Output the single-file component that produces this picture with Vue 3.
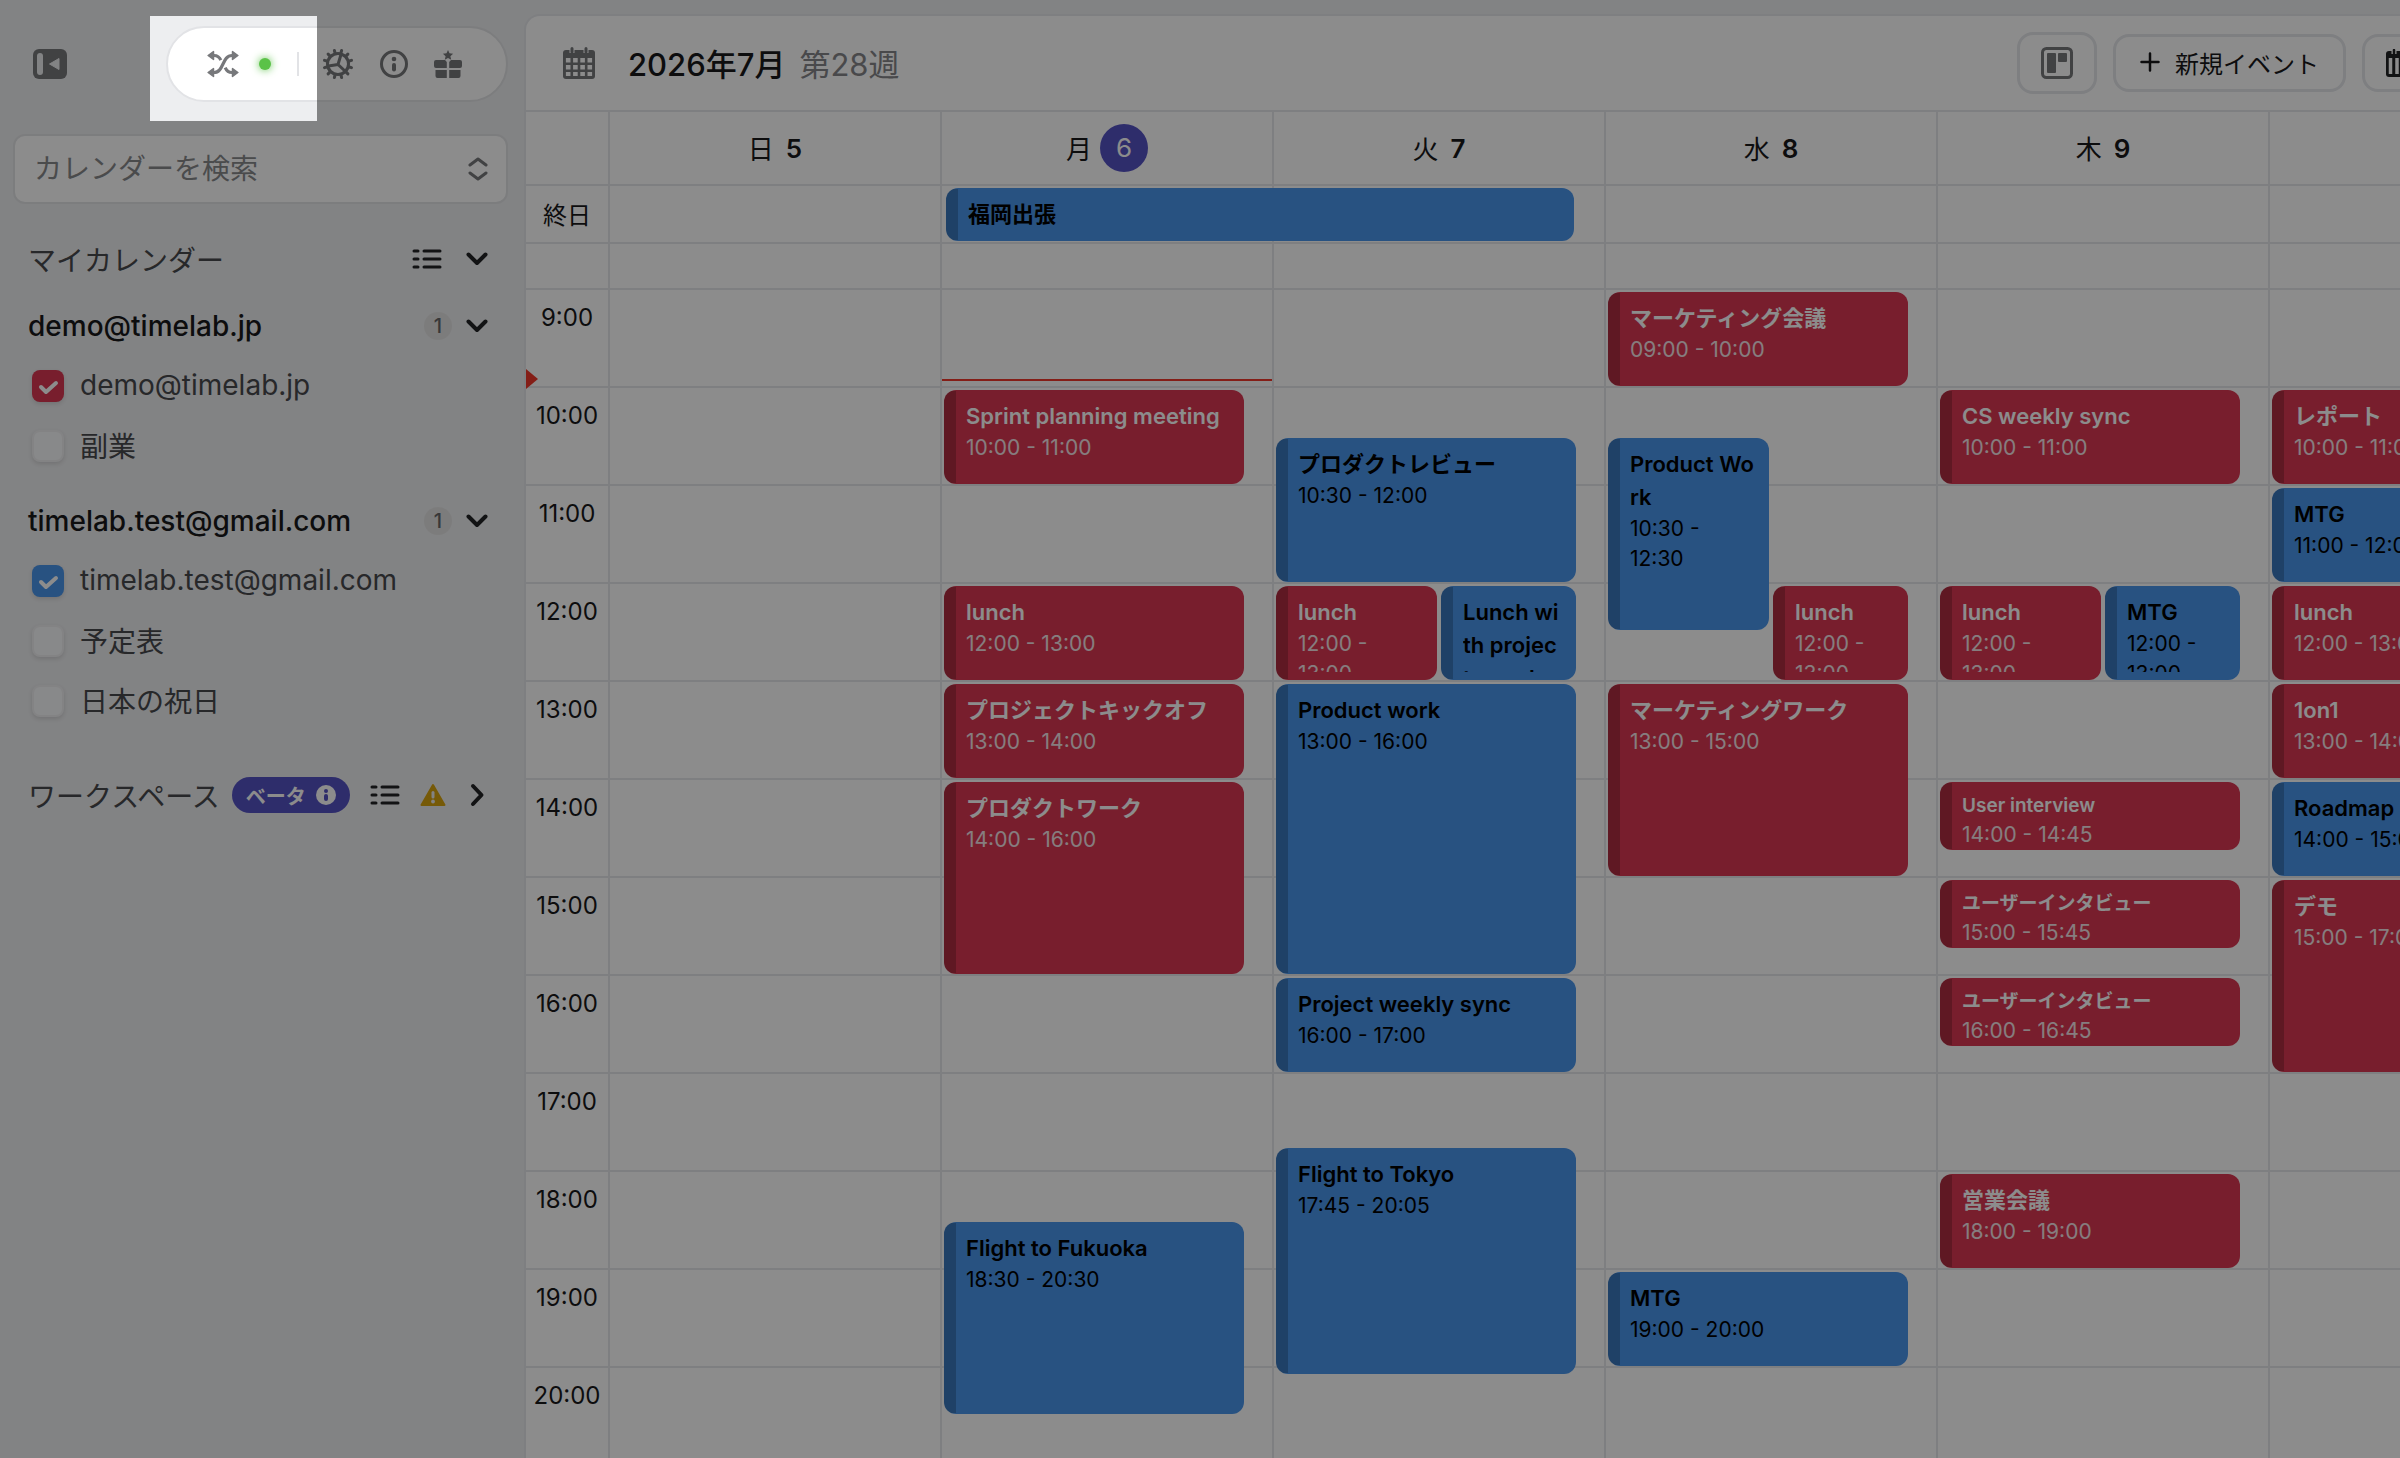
<script setup>
import { ref } from 'vue'

const HOUR = 98
const MINUTE = 1.6
const FIRST_ROW = 46

const hours = Array.from({ length: 12 }, (_, i) => `${i + 9}:00`)

const groups = ref([
  {
    account: 'demo@timelab.jp',
    calendars: [
      { id: 'demo', name: 'demo@timelab.jp', on: true, color: 'red' },
      { id: 'side', name: '副業', on: false, color: 'red' },
    ],
  },
  {
    account: 'timelab.test@gmail.com',
    calendars: [
      { id: 'test', name: 'timelab.test@gmail.com', on: true, color: 'blue' },
      { id: 'plan', name: '予定表', on: false, color: 'blue' },
      { id: 'holiday', name: '日本の祝日', on: false, color: 'blue' },
    ],
  },
])

const e = (title, start, end, color, slot = 'full') => ({ title, start, end, color, slot })

const days = [
  { name: '日', date: 5, events: [] },
  {
    name: '月', date: 6, today: true,
    events: [
      e('Sprint planning meeting', '10:00', '11:00', 'red'),
      e('lunch', '12:00', '13:00', 'red'),
      e('プロジェクトキックオフ', '13:00', '14:00', 'red'),
      e('プロダクトワーク', '14:00', '16:00', 'red'),
      e('Flight to Fukuoka', '18:30', '20:30', 'blue'),
    ],
  },
  {
    name: '火', date: 7,
    events: [
      e('プロダクトレビュー', '10:30', '12:00', 'blue'),
      e('lunch', '12:00', '13:00', 'red', 'first'),
      e('Lunch with project member', '12:00', '13:00', 'blue', 'second'),
      e('Product work', '13:00', '16:00', 'blue'),
      e('Project weekly sync', '16:00', '17:00', 'blue'),
      e('Flight to Tokyo', '17:45', '20:05', 'blue'),
    ],
  },
  {
    name: '水', date: 8,
    events: [
      e('マーケティング会議', '09:00', '10:00', 'red'),
      e('Product Work', '10:30', '12:30', 'blue', 'first'),
      e('lunch', '12:00', '13:00', 'red', 'second'),
      e('マーケティングワーク', '13:00', '15:00', 'red'),
      e('MTG', '19:00', '20:00', 'blue'),
    ],
  },
  {
    name: '木', date: 9,
    events: [
      e('CS weekly sync', '10:00', '11:00', 'red'),
      e('lunch', '12:00', '13:00', 'red', 'first'),
      e('MTG', '12:00', '13:00', 'blue', 'second'),
      e('User interview', '14:00', '14:45', 'red'),
      e('ユーザーインタビュー', '15:00', '15:45', 'red'),
      e('ユーザーインタビュー', '16:00', '16:45', 'red'),
      e('営業会議', '18:00', '19:00', 'red'),
    ],
  },
  {
    name: '', date: '',
    events: [
      e('レポート', '10:00', '11:00', 'red'),
      e('MTG', '11:00', '12:00', 'blue'),
      e('lunch', '12:00', '13:00', 'red'),
      e('1on1', '13:00', '14:00', 'red'),
      e('Roadmap', '14:00', '15:00', 'blue'),
      e('デモ', '15:00', '17:00', 'red'),
    ],
  },
]

function offset(time) {
  const [h, m] = time.split(':').map(Number)
  return FIRST_ROW + (h - 9) * HOUR + Math.round(m * MINUTE)
}

function place(ev) {
  const top = offset(ev.start)
  return { top: `${top + 2}px`, height: `${offset(ev.end) - top - 4}px` }
}

const isShort = (ev) => offset(ev.end) - offset(ev.start) < 80
const nowTop = { top: `${offset('9:56') - 1}px` }
const cogTeeth = Array.from({ length: 12 }, (_, i) => i * 30 + 15)
</script>

<template>
  <div class="app">
    <aside class="sidebar">
      <div class="top">
        <button class="plain" type="button" aria-label="サイドバーを閉じる">
          <svg width="34" height="30" viewBox="0 0 34 30">
            <rect width="34" height="30" rx="6" fill="#77787b" />
            <rect x="4" y="4" width="6" height="22" rx="3" fill="#edeef0" />
            <path d="M26 9.500v11L16.500 15z" fill="#edeef0" stroke="#edeef0" stroke-linejoin="round" />
          </svg>
        </button>
        <nav class="pill">
          <button class="plain" type="button" aria-label="シャッフル">
            <svg width="32" height="28" viewBox="0 0 32 28" fill="none" stroke="#77787b" stroke-width="3.200">
              <path d="M7 22.500C17 22.500 15 5.500 25 5.500" />
              <path d="M7 5.500c3.500 0 5.500 1.600 6.800 4.600" />
              <path d="M18.200 17.600c1.400 3.200 3.300 4.900 6.800 4.900" />
              <g fill="#77787b" stroke-width="1.500" stroke-linejoin="round">
                <path d="M25.500 1.600v7.800l5.400-3.900zM25.500 18.600v7.800l5.400-3.900zM6.500 1.600v7.800L1.100 5.500zM6.500 18.600v7.800l-5.400-3.900z" />
              </g>
            </svg>
          </button>
          <span class="status"></span>
          <span class="divider"></span>
          <button class="plain" type="button" aria-label="設定">
            <svg width="32" height="32" viewBox="0 0 32 32" fill="none" stroke="#77787b" stroke-linecap="round">
              <circle cx="16" cy="16" r="10.500" stroke-width="3" />
              <path v-for="a in cogTeeth" :key="a" d="M16 4.500V2" stroke-width="3" :transform="`rotate(${a} 16 16)`" />
              <path d="M16 16.500L19 6.500M16 16.500L6.500 18M16 16.500l7.500 7" stroke-width="3" />
            </svg>
          </button>
          <button class="plain" type="button" aria-label="情報">
            <svg width="28" height="28" viewBox="0 0 28 28">
              <circle cx="14" cy="14" r="12.500" fill="none" stroke="#77787b" stroke-width="3" />
              <circle cx="14" cy="9" r="2.300" fill="#77787b" />
              <rect x="12" y="13" width="4" height="8.500" rx="2" fill="#77787b" />
            </svg>
          </button>
          <button class="plain" type="button" aria-label="特典">
            <svg width="28" height="28" viewBox="0 0 28 28" fill="#77787b">
              <path d="M14 0l1.500 3.300 3.600.4-2.700 2.500.8 3.600L14 8l-3.200 1.800.8-3.600-2.700-2.500 3.600-.4z" />
              <path d="M2 10h9l1.800 2V18H2a2 2 0 0 1-2-2v-4a2 2 0 0 1 2-2zM26 10h-9l-1.800 2V18H26a2 2 0 0 0 2-2v-4a2 2 0 0 0-2-2z" />
              <path d="M1.500 20h11.300v8H3.500a2 2 0 0 1-2-2zM15.200 20h11.300v6a2 2 0 0 1-2 2h-9.300z" />
            </svg>
          </button>
        </nav>
      </div>

      <div class="search">
        <input type="text" placeholder="カレンダーを検索" aria-label="カレンダーを検索" />
        <svg width="20" height="24" viewBox="0 0 20 24" fill="none" stroke="#77787b" stroke-width="3" stroke-linecap="round" stroke-linejoin="round">
          <path d="M2 8l8-6 8 6M2 16l8 6 8-6" />
        </svg>
      </div>

      <div class="section">
        <h2>マイカレンダー</h2>
        <button class="plain" type="button" aria-label="一覧">
          <svg class="list" width="30" height="20" viewBox="0 0 30 20"><path d="M2 2h4M12 2h16M2 10h4M12 10h16M2 18h4M12 18h16" /></svg>
        </button>
        <button class="plain" type="button" aria-label="折りたたむ">
          <svg class="chevron" width="22" height="22" viewBox="0 0 22 22"><path d="M2.500 6.500L11 15l8.500-8.500" /></svg>
        </button>
      </div>

      <section v-for="g in groups" :key="g.account" class="group">
        <div class="account">
          <h3>{{ g.account }}</h3>
          <span class="count">1</span>
          <button class="plain" type="button" :aria-label="`${g.account} を折りたたむ`">
            <svg class="chevron" width="22" height="22" viewBox="0 0 22 22"><path d="M2.500 6.500L11 15l8.500-8.500" /></svg>
          </button>
        </div>
        <label v-for="c in g.calendars" :key="c.id" class="calendar" :for="c.id">
          <input :id="c.id" v-model="c.on" type="checkbox" :class="c.color" />
          <span>{{ c.name }}</span>
        </label>
      </section>

      <div class="section workspace">
        <h2>ワークスペース</h2>
        <span class="beta">ベータ
          <svg width="20" height="20" viewBox="0 0 20 20">
            <circle cx="10" cy="10" r="10" fill="#fff" />
            <circle cx="10" cy="6" r="2" fill="#5552c4" />
            <rect x="8" y="9" width="4" height="7" rx="2" fill="#5552c4" />
          </svg>
        </span>
        <button class="plain push" type="button" aria-label="一覧">
          <svg class="list" width="30" height="20" viewBox="0 0 30 20"><path d="M2 2h4M12 2h16M2 10h4M12 10h16M2 18h4M12 18h16" /></svg>
        </button>
        <svg width="26" height="24" viewBox="0 0 26 24">
          <path d="M13 2L24.500 22h-23z" fill="#d8a410" stroke="#d8a410" stroke-width="2" stroke-linejoin="round" />
          <rect x="11.500" y="8" width="3" height="7.500" rx="1.500" fill="#edeef0" />
          <circle cx="13" cy="18.500" r="1.900" fill="#edeef0" />
        </svg>
        <button class="plain" type="button" aria-label="開く">
          <svg class="chevron" width="22" height="24" viewBox="0 0 22 24"><path d="M7 3l8.500 9L7 21" /></svg>
        </button>
      </div>
    </aside>

    <main class="panel">
      <header class="bar">
        <svg width="32" height="32" viewBox="0 0 32 32">
          <path d="M3 3h26a3 3 0 0 1 3 3v23a3 3 0 0 1-3 3H3a3 3 0 0 1-3-3V6a3 3 0 0 1 3-3z" fill="#77787b" />
          <path d="M9 0v6M23 0v6" stroke="#fff" stroke-width="5" />
          <path d="M9 1.500v3.500M23 1.500v3.500" stroke="#77787b" stroke-width="3" stroke-linecap="round" />
          <path d="M5.200 11v18M12.400 11v18M19.600 11v18M26.800 11v18" stroke="#fff" stroke-width="4.600" stroke-dasharray="4.400 2.600" />
        </svg>
        <h1>2026年7月 <span>第28週</span></h1>
        <div class="actions">
          <button class="box layout" type="button" aria-label="レイアウト">
            <svg width="32" height="32" viewBox="0 0 32 32">
              <rect x="1.500" y="1.500" width="29" height="29" rx="4" fill="none" stroke="#77787b" stroke-width="3" />
              <rect x="6" y="6" width="9" height="20" rx="1" fill="#77787b" />
              <rect x="17" y="6" width="9" height="9" rx="1" fill="#77787b" />
            </svg>
          </button>
          <button class="box create" type="button">
            <svg width="20" height="20" viewBox="0 0 20 20" stroke="#18181a" stroke-width="2.500" stroke-linecap="round">
              <path d="M10 1.500v17M1.500 10h17" />
            </svg>
            新規イベント
          </button>
          <button class="box view" type="button" aria-label="表示切替">
            <svg width="28" height="28" viewBox="0 0 28 28">
              <rect y="2" width="28" height="26" rx="3" fill="#222325" />
              <path d="M8 0v5M20 0v5" stroke="#fff" stroke-width="5" />
              <path d="M8 1v3.500M20 1v3.500" stroke="#222325" stroke-width="2.500" stroke-linecap="round" />
              <path d="M4.500 9v16M11 9v16M17.500 9v16M24 9v16" stroke="#fff" stroke-width="3.500" />
            </svg>
          </button>
        </div>
      </header>

      <div class="week head">
        <div class="cell"></div>
        <div v-for="(d, i) in days" :key="i" class="cell day" :class="{ today: d.today }">
          <span>{{ d.name }}</span><b>{{ d.date }}</b>
        </div>
      </div>

      <div class="week allday">
        <div class="cell label">終日</div>
        <div v-for="(d, i) in days" :key="i" class="cell">
          <article v-if="d.today" class="event blue span"><h4>福岡出張</h4></article>
        </div>
      </div>

      <div class="week grid">
        <div class="column times">
          <div class="slot part"></div>
          <div v-for="h in hours" :key="h" class="slot">{{ h }}</div>
          <i class="now-arrow" :style="nowTop"></i>
        </div>
        <div v-for="(d, i) in days" :key="i" class="column">
          <div class="slot part"></div>
          <div v-for="h in hours" :key="h" class="slot"></div>
          <i v-if="d.today" class="now-line" :style="nowTop"></i>
          <article
            v-for="ev in d.events"
            :key="ev.start + ev.slot"
            class="event"
            :class="[ev.color, ev.slot, { short: isShort(ev) }]"
            :style="place(ev)"
          >
            <div class="body">
              <h4>{{ ev.title }}</h4>
              <p>{{ ev.start }} - {{ ev.end }}</p>
            </div>
          </article>
        </div>
      </div>
    </main>

    <div class="spotlight"></div>
  </div>
</template>

<style>
body {
  margin: 0;
  overflow: hidden;
}
</style>

<style scoped>
* {
  box-sizing: border-box;
}
.app {
  position: relative;
  display: grid;
  grid-template-columns: 524px minmax(0, 1fr);
  height: 100vh;
  overflow: hidden;
  background: #edeef0;
  color: #18181a;
  font-family: Inter, "Noto Sans CJK JP", sans-serif;
}
h1, h2, h3, h4, p {
  margin: 0;
}
svg {
  display: block;
  flex: none;
}
button {
  font: inherit;
  color: inherit;
  cursor: pointer;
}
.plain {
  padding: 0;
  border: 0;
  background: none;
}

.sidebar {
  padding: 26px 16px 0 13px;
}
.top {
  display: flex;
  align-items: center;
  justify-content: space-between;
  padding-left: 20px;
}
.pill {
  display: flex;
  align-items: center;
  gap: 26px;
  width: 342px;
  height: 76px;
  padding-left: 39px;
  border: 2px solid #e2e3e6;
  border-radius: 38px;
  background: #fff;
}
.status {
  width: 12px;
  height: 12px;
  margin-left: -6px;
  border-radius: 50%;
  background: #5bc248;
  box-shadow: 0 0 8px #5bc248;
}
.divider {
  width: 2px;
  height: 24px;
  margin-right: -3px;
  background: #e2e3e6;
}
.search {
  display: flex;
  align-items: center;
  height: 70px;
  margin-top: 32px;
  padding: 0 18px 0 19px;
  border: 2px solid #e2e3e6;
  border-radius: 12px;
  background: #fff;
}
.search input {
  flex: 1;
  min-width: 0;
  padding: 0;
  border: 0;
  outline: 0;
  background: none;
  font: inherit;
  font-size: 28px;
}
.search input::placeholder {
  color: #88898b;
  opacity: 1;
}
.section, .account {
  display: flex;
  align-items: center;
  gap: 24px;
  height: 60px;
  padding: 0 20px 0 15px;
}
.section {
  margin: 25px 0 7px;
}
.section h2 {
  flex: 1;
  font-size: 28px;
  font-weight: 400;
  color: #48494d;
}
.list {
  fill: none;
  stroke: #222326;
  stroke-width: 3;
  stroke-linecap: round;
}
.chevron {
  fill: none;
  stroke: #222326;
  stroke-width: 4;
  stroke-linecap: round;
  stroke-linejoin: round;
}
.group {
  margin-bottom: 15px;
}
.account {
  gap: 14px;
}
.account h3 {
  flex: 1;
  font-size: 28px;
  font-weight: 500;
}
.count {
  width: 28px;
  border-radius: 14px;
  background: #e2e2e2;
  color: #66676a;
  font-size: 20px;
  font-weight: 500;
  line-height: 28px;
  text-align: center;
}
.calendar {
  display: flex;
  align-items: center;
  gap: 16px;
  height: 60px;
  padding-left: 19px;
  color: #48494d;
  font-size: 28px;
}
.calendar span {
  padding-bottom: 2px;
}
.calendar input {
  appearance: none;
  width: 32px;
  height: 32px;
  margin: 0;
  border: 2px solid #eeeff1;
  border-radius: 8px;
  background: #f8f9fb;
  box-shadow: 0 2px 4px rgba(0, 0, 0, 0.12);
}
.calendar input:checked {
  border: 0;
  background: #da3852 url("data:image/svg+xml,%3Csvg xmlns='http://www.w3.org/2000/svg' viewBox='0 0 32 32'%3E%3Cpath d='M9 17l5 5 10-9' fill='none' stroke='white' stroke-width='4' stroke-linecap='round' stroke-linejoin='round'/%3E%3C/svg%3E");
}
.calendar input.blue:checked {
  background-color: #4995ec;
}
.workspace {
  gap: 20px;
  margin-top: 34px;
}
.workspace h2 {
  flex: none;
}
.beta {
  display: flex;
  align-items: center;
  gap: 10px;
  height: 36px;
  margin-left: -8px;
  padding: 0 14px;
  border-radius: 18px;
  background: #5552c4;
  color: #fff;
  font-size: 20px;
  font-weight: 700;
}
.push {
  margin-left: auto;
}

.panel {
  margin-top: 14px;
  border: solid #e5e7eb;
  border-width: 2px 0 0 2px;
  border-radius: 16px 0 0 0;
  background: #fff;
  overflow: hidden;
}
.bar {
  display: flex;
  align-items: center;
  height: 96px;
  padding-left: 37px;
  border-bottom: 2px solid #e5e7eb;
}
.bar h1 {
  display: flex;
  gap: 14px;
  margin-left: 33px;
  padding-bottom: 2px;
  font-size: 31px;
  font-weight: 500;
  white-space: nowrap;
}
.bar h1 span {
  font-weight: 400;
  color: #858689;
}
.actions {
  display: flex;
  align-items: center;
  gap: 16px;
  margin-left: auto;
  margin-right: -62px;
}
.box {
  display: flex;
  align-items: center;
  justify-content: center;
  gap: 15px;
  height: 58px;
  padding: 0;
  border: 3px solid #e5e7eb;
  border-radius: 16px;
  background: #fff;
}
.layout {
  width: 80px;
  height: 62px;
}
.create {
  width: 233px;
  padding-bottom: 2px;
  font-size: 24px;
}
.view {
  width: 100px;
  justify-content: flex-start;
  padding-left: 21px;
}

.week {
  display: grid;
  grid-template-columns: 84px repeat(6, minmax(332px, 1fr));
}
.cell {
  display: flex;
  align-items: center;
  justify-content: center;
  border: solid #e5e7eb;
  border-width: 0 2px 2px 0;
}
.head .cell {
  height: 74px;
  font-size: 26px;
}
.day {
  gap: 12px;
}
.day span {
  padding-bottom: 2px;
}
.day b {
  font-weight: 600;
}
.day.today {
  gap: 8px;
}
.today b {
  width: 48px;
  border-radius: 50%;
  background: #5552c4;
  color: #fff;
  font-weight: 400;
  line-height: 48px;
  text-align: center;
}
.allday .cell {
  position: relative;
  height: 58px;
  font-size: 24px;
}
.allday .label {
  padding-bottom: 2px;
}
.column {
  position: relative;
  border-right: 2px solid #e5e7eb;
}
.slot {
  height: 98px;
  padding-top: 13px;
  border-bottom: 2px solid #e5e7eb;
  font-size: 24px;
  line-height: 30px;
  text-align: center;
}
.slot.part {
  height: 46px;
}
.now-line {
  position: absolute;
  left: 0;
  right: 0;
  height: 2px;
  background: #f0382a;
}
.now-arrow {
  position: absolute;
  left: 0;
  margin-top: -10px;
  border: solid transparent;
  border-width: 10px 0 10px 12px;
  border-left-color: #f0382a;
}

.event {
  position: absolute;
  left: 2px;
  width: 300px;
  padding: 10px 13px 8px 22px;
  border-radius: 12px;
  overflow: hidden;
}
.event::before {
  content: "";
  position: absolute;
  inset: 1px auto 1px 0;
  width: 12px;
  background: rgba(0, 0, 0, 0.2);
}
.event.red {
  background: #da3852;
  color: #fff;
}
.event.blue {
  background: #4995ec;
  color: #000;
}
.event.first {
  width: 161px;
}
.event.second {
  left: 167px;
  width: 135px;
}
.event.span {
  z-index: 1;
  top: 2px;
  left: 4px;
  width: 628px;
  height: 53px;
}
.body {
  height: 100%;
  overflow: hidden;
}
.short {
  padding-bottom: 0;
}
.event h4 {
  font-size: 22px;
  font-weight: 600;
  line-height: 33px;
  word-break: break-all;
}
.event.short h4 {
  font-size: 19px;
  line-height: 28px;
}
.event p {
  font-size: 21px;
  line-height: 30px;
}
.event.red p {
  color: #f4e4e7;
}

.spotlight {
  position: absolute;
  z-index: 2;
  top: 16px;
  left: 150px;
  width: 167px;
  height: 105px;
  box-shadow: 0 0 0 3000px rgba(0, 0, 0, 0.45);
  pointer-events: none;
}
</style>
